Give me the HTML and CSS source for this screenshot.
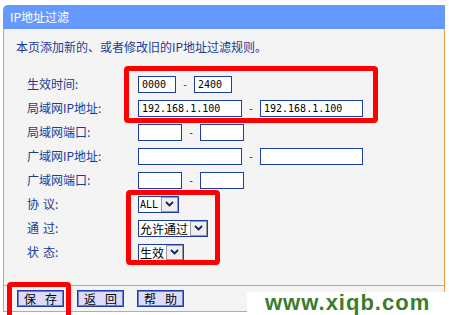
FILE: index.html
```html
<!DOCTYPE html>
<html lang="zh">
<head>
<meta charset="utf-8">
<title>IP地址过滤</title>
<link rel="stylesheet" href="styles.css">
</head>
<body>
<div class="panel">
  <div class="head">IP地址过滤</div>
  <div class="body">
    <p class="desc">本页添加新的、或者修改旧的IP地址过滤规则。</p>
    <div class="form">
      <div class="label">生效时间:</div>
      <div class="field"><input class="in w38" value="0000"><span class="dash">-</span><input class="in w38" value="2400"></div>

      <div class="label">局域网IP地址:</div>
      <div class="field"><input class="in w104" value="192.168.1.100"><span class="dash">-</span><input class="in w103" value="192.168.1.100"></div>

      <div class="label">局域网端口:</div>
      <div class="field"><input class="in w44" value=""><span class="dash">-</span><input class="in w44" value=""></div>

      <div class="label">广域网IP地址:</div>
      <div class="field"><input class="in w104" value=""><span class="dash">-</span><input class="in w103" value=""></div>

      <div class="label">广域网端口:</div>
      <div class="field"><input class="in w44" value=""><span class="dash">-</span><input class="in w44" value=""></div>

      <div class="label">协<span class="sp"></span>议:</div>
      <div class="field"><div class="select"><span class="opt mono">ALL</span><span class="arrow"><svg width="9" height="6" viewBox="0 0 9 6"><path d="M1 1 L4.5 4.5 L8 1" fill="none" stroke="#14245a" stroke-width="1.8"/></svg></span></div></div>

      <div class="label">通<span class="sp"></span>过:</div>
      <div class="field"><div class="select"><span class="opt">允许通过</span><span class="arrow"><svg width="9" height="6" viewBox="0 0 9 6"><path d="M1 1 L4.5 4.5 L8 1" fill="none" stroke="#14245a" stroke-width="1.8"/></svg></span></div></div>

      <div class="label">状<span class="sp"></span>态:</div>
      <div class="field"><div class="select"><span class="opt">生效</span><span class="arrow"><svg width="9" height="6" viewBox="0 0 9 6"><path d="M1 1 L4.5 4.5 L8 1" fill="none" stroke="#14245a" stroke-width="1.8"/></svg></span></div></div>
    </div>
  </div>
  <div class="actions">
    <button class="btn"><span>保</span><span>存</span></button>
    <button class="btn"><span>返</span><span>回</span></button>
    <button class="btn"><span>帮</span><span>助</span></button>
  </div>
</div>

<div class="mark mark-1"></div>
<div class="mark mark-2"></div>
<div class="mark mark-3"></div>
<div class="watermark">www.xiqb.com</div>
</body>
</html>
```
FILE: styles.css
```css
html, body {
  margin: 0;
  padding: 0;
  background: #ffffff;
  width: 449px;
  height: 315px;
  overflow: hidden;
  position: relative;
  font-family: "Noto Sans CJK SC", "DejaVu Sans", sans-serif;
  font-size: 12px;
}

.panel {
  margin: 5px 0 0 3px;
  width: 442px;
}

.head {
  height: 24px;
  line-height: 24px;
  background: #6699ff;
  color: #ffffff;
  padding-left: 7px;
  border-top-left-radius: 5px;
  font-size: 12px;
}

.body {
  background: #f4f4f4;
  border-left: 1px solid #f39c4a;
  border-right: 1px solid #f39c4a;
  height: 256px;
}

.desc {
  margin: 0;
  padding: 11px 0 0 12px;
  line-height: 14px;
  color: #1a3a96;
}

.form {
  margin-top: 18px;
  padding-left: 23px;
  display: grid;
  grid-template-columns: 111px auto;
  grid-auto-rows: 24px;
  align-items: center;
}

.form .label {
  color: #1a3a96;
  line-height: 14px;
  white-space: nowrap;
}

.sp {
  display: inline-block;
  width: 4px;
}

.field {
  display: flex;
  align-items: center;
}

.in {
  box-sizing: border-box;
  height: 17px;
  margin: 0;
  padding: 0 3px;
  border: 1px solid #1c3ca8;
  background: #ffffff;
  font-family: "DejaVu Sans Mono", monospace;
  font-size: 10px;
  color: #000000;
  outline: none;
}

.w38 { width: 38px; }
.w44 { width: 44px; }
.w103 { width: 103px; }
.w104 { width: 104px; }

.dash {
  width: 18px;
  text-align: center;
  color: #1a3a96;
  font-family: "DejaVu Sans Mono", monospace;
  font-size: 10px;
}

.select {
  display: inline-flex;
  box-sizing: border-box;
  height: 17px;
  border: 1px solid #1c3ca8;
  background: #ffffff;
  align-items: stretch;
}

.opt {
  padding: 0 2px 0 1px;
  line-height: 15px;
  color: #000000;
}

.opt.mono {
  font-family: "DejaVu Sans Mono", monospace;
  font-size: 10px;
  padding-right: 3px;
}

.arrow {
  width: 17px;
  box-sizing: border-box;
  border: 1px solid #9a9a9a;
  background: #eeeeee;
  display: flex;
  align-items: center;
  justify-content: center;
}

.actions {
  background: #f4f4f4;
  border: 1px solid #f39c4a;
  border-top: 1px solid #f39c4a;
  height: 25px;
  padding-left: 13px;
  display: flex;
  align-items: center;
  gap: 13px;
}

.btn {
  box-sizing: border-box;
  width: 47px;
  height: 17px;
  margin: 0;
  padding: 0;
  border: 1px solid #1c3ca8;
  box-shadow: inset 0 0 0 1px #6a7fd0;
  background: #dcdcfa;
  color: #000000;
  font-family: "Noto Sans CJK SC", sans-serif;
  font-size: 12px;
  line-height: 15px;
  display: inline-flex;
  justify-content: center;
  align-items: center;
  gap: 9px;
}

.mark {
  position: absolute;
  box-sizing: border-box;
  border: 5px solid #ff0000;
  border-radius: 4px;
}

.mark-1 { left: 124px; top: 66px; width: 254px; height: 57px; }
.mark-2 { left: 126px; top: 190px; width: 94px; height: 75px; }
.mark-3 { left: 7px; top: 282px; width: 64px; height: 40px; }

.watermark {
  position: absolute;
  left: 247px;
  top: 292px;
  width: 202px;
  height: 23px;
  background: #ffffff;
  color: #3b7d2b;
  font-family: "Liberation Sans", Arial, sans-serif;
  font-weight: bold;
  font-size: 22px;
  letter-spacing: 1px;
  line-height: 22px;
  padding-left: 18px;
  box-sizing: border-box;
  white-space: nowrap;
}
```
